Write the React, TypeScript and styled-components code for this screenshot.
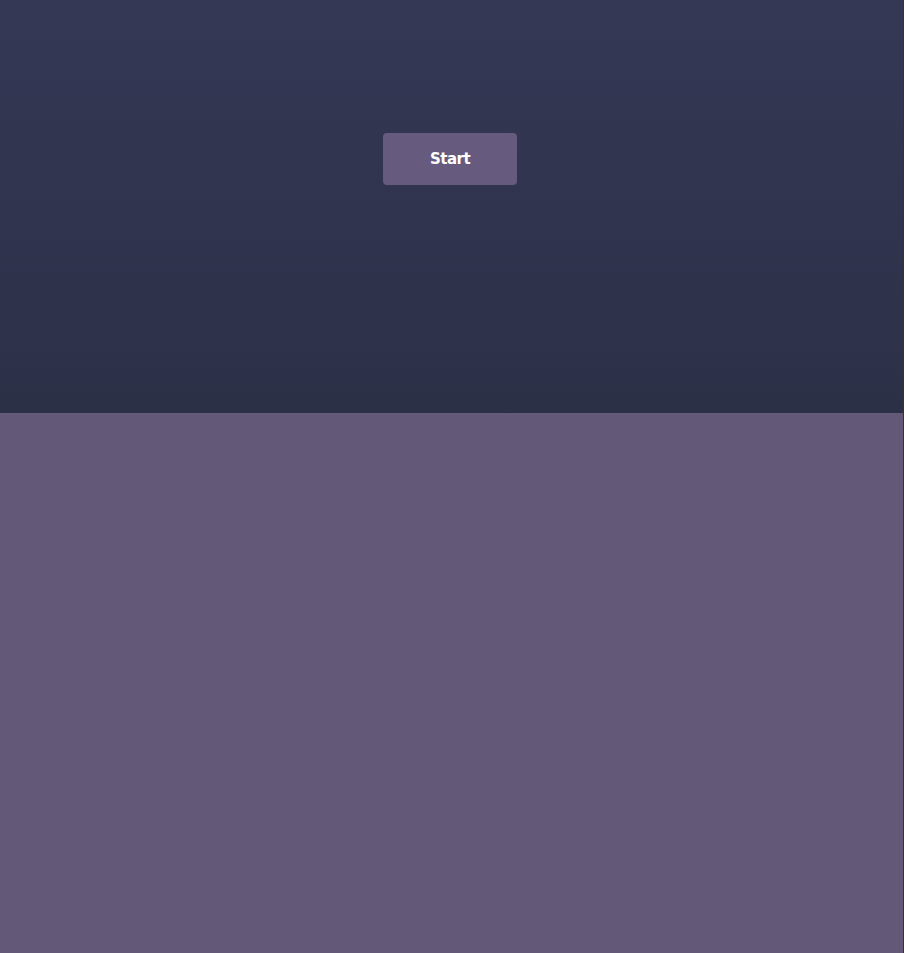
import React from "react";
import styled, { createGlobalStyle } from "styled-components";

const Global = createGlobalStyle`
  html, body { margin: 0; padding: 0; height: 100%; background: #3a3222; }
  #root { height: 100%; }
`;

const Page = styled.div`
  width: calc(100% - 1px);
  height: 100%;
  display: flex;
  flex-direction: column;
  background: #645878;
`;

const Stage = styled.section`
  height: 413px;
  flex: none;
  background: linear-gradient(180deg, #353855 0%, #2c3047 100%);
  display: flex;
  justify-content: center;
  align-items: flex-start;
  padding-top: 133px;
  box-sizing: border-box;
`;

const StartButton = styled.button`
  width: 134px;
  height: 52px;
  margin-right: 3px;
  border: none;
  border-radius: 4px;
  background: #665a7e;
  color: #ffffff;
  font-family: "DejaVu Sans", Verdana, sans-serif;
  font-weight: 700;
  font-size: 15px;
  letter-spacing: -0.5px;
  cursor: pointer;
  padding: 0 0 1px;
`;

const Lower = styled.div`
  flex: 1;
`;

export default function App() {
  return (
    <>
      <Global />
      <Page>
        <Stage>
          <StartButton>Start</StartButton>
        </Stage>
        <Lower />
      </Page>
    </>
  );
}
